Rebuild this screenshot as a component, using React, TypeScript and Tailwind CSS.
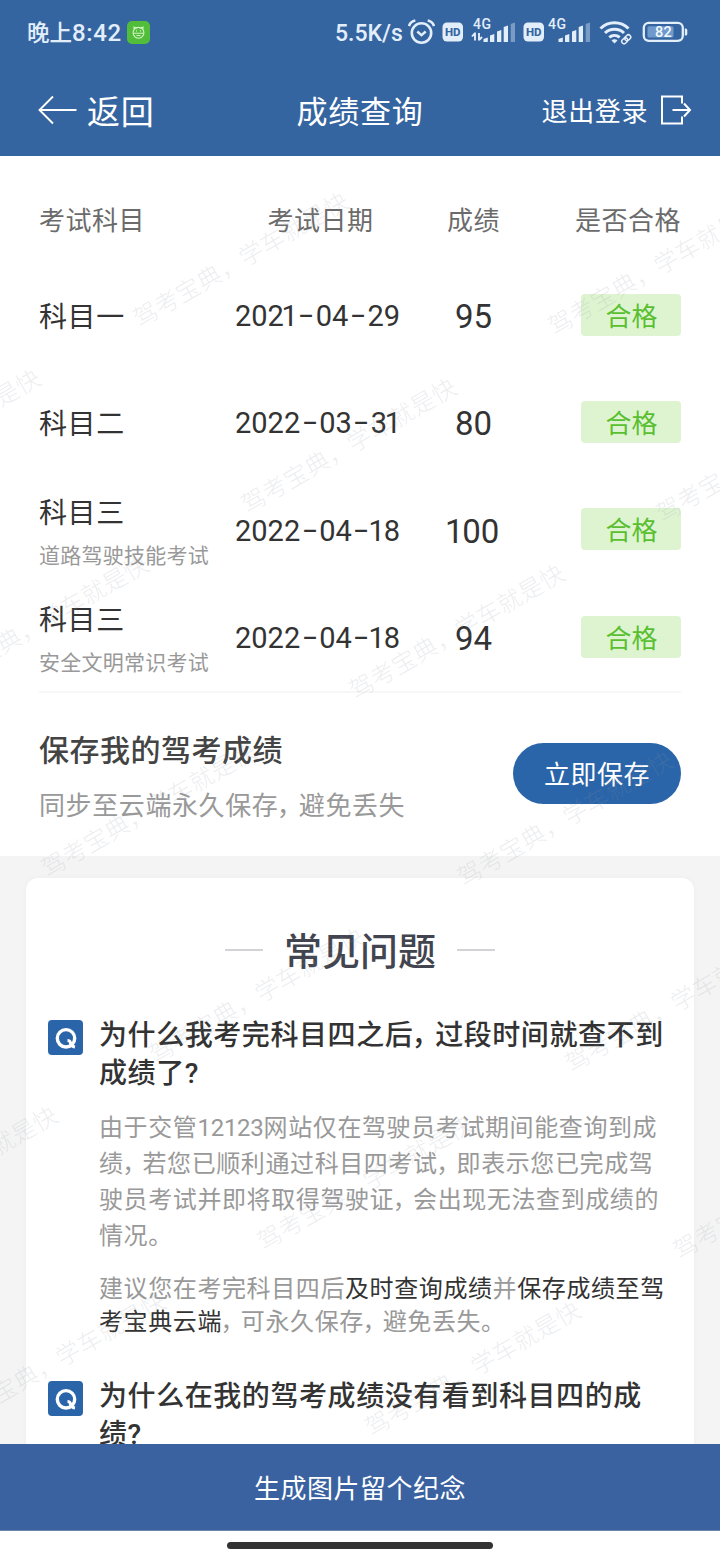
import { Fragment } from "react";

const CJK = "font-['Roboto','Noto_Sans_CJK_SC',sans-serif]";

const watermarks: { x: number; y: number }[] = [];
for (let i = -4; i <= 3; i++) {
  for (let j = -3; j <= 9; j++) {
    const x = 145.5 + 307.5 * i + 108 * j;
    const y = 158.5 - 177.5 * i + 186.4 * j;
    if (x > -260 && x < 740 && y > -40 && y < 1450) watermarks.push({ x, y });
  }
}

/** Text whose full-width commas are set a little narrower than one em. */
function T({ children }: { children: string }) {
  const parts = children.split("，");
  return (
    <>
      {parts.map((part, i) => (
        <Fragment key={i}>
          {i > 0 && <span className="-ml-[0.06em] -mr-[0.18em]">，</span>}
          {part}
        </Fragment>
      ))}
    </>
  );
}

/** Digits with a proportional, narrower "1". */
function Digits({ value }: { value: string }) {
  return (
    <span className="inline-flex">
      {value.split(/(1)/).map((part, i) =>
        part === "1" ? (
          <span key={i} className="-ml-[0.08em] -mr-[0.04em]">
            1
          </span>
        ) : (
          <Fragment key={i}>{part && <span>{part}</span>}</Fragment>
        ),
      )}
    </span>
  );
}

function HdIcon() {
  return (
    <svg width="22" height="20" viewBox="0 0 22 20" className="shrink-0">
      <rect x="0.5" y="0.5" width="20.5" height="19" rx="4.5" fill="#e3eefb" />
      <text x="10.8" y="14.2" textAnchor="middle" fontSize="11.5" fontWeight="800" fill="#3565a0" fontFamily="Roboto">
        HD
      </text>
    </svg>
  );
}

function Signal({ data }: { data?: boolean }) {
  const o = data ? 0 : -2;
  return (
    <svg width={data ? 45 : 43} height="28" viewBox={data ? "0 0 45 28" : "0 0 43 28"} className="shrink-0">
      <text x={data ? 2 : 0} y="14" fontSize="14" fontWeight="500" fill="#e3eefb" fontFamily="Roboto" letterSpacing="0.500">
        4G
      </text>
      {data && (
        <path d="M4 25.5v-8M4 18l-3 3.5M8 18v7.5M8 25.2l3-3.2" stroke="#e3eefb" strokeWidth="1.9" fill="none" />
      )}
      <g fill="#e3eefb" transform={`translate(${o} 0)`}>
        <path d="M12.500 27v-3l4.300-1.500v4.500z" />
        <path d="M19 27v-6.500l4.300-1.500v8z" />
        <path d="M26 27v-10.500l4.300-1.500v12z" />
        <path d="M32.700 27v-15l4.300-1.500v16.500z" />
        <path d="M39.700 27v-18l4.300-1.500v19.500z" opacity="0.4" />
      </g>
    </svg>
  );
}

function StatusBar() {
  return (
    <div className="flex h-[64px] items-center text-[#e3eefb]">
      <span className="ml-[27px] mt-[2px] flex w-[100px] shrink-0 items-center whitespace-nowrap font-medium leading-none">
        <span className="text-[22.500px]">晚上</span>
        <span className="text-[24px] tracking-[0.600px]">8:42</span>
      </span>
      <svg width="23" height="23" viewBox="0 0 23 23" className="shrink-0">
        <rect width="23" height="23" rx="5" fill="#52bd3b" />
        <g fill="none" stroke="#d3f5c4" strokeWidth="1.1">
          <path d="M7 8.500V6l2.200 1a6 6 0 0 1 4.600 0L16 6v2.500" />
          <circle cx="11.500" cy="11.800" r="5.400" />
          <path d="M6.300 12.300h10.400M9.500 9.300v1.200M13.500 9.300v1.200M9.500 14.500h4" />
        </g>
      </svg>
      <span className="ml-[185px] mt-[2px] w-[73px] shrink-0 whitespace-nowrap text-[23px] font-medium leading-none">
        5.5K/s
      </span>
      <svg width="27" height="26" viewBox="0 0 27 26" className="shrink-0" fill="none" stroke="#e3eefb" strokeWidth="2.600">
        <circle cx="13.500" cy="14" r="9.700" />
        <path d="M1 7C2 4 4.500 2 7.300 1.500M26 7C25 4 22.500 2 19.700 1.500" />
        <path d="M9.300 12.500l4.200 3.700 4.200-3.700" strokeWidth="2.400" />
      </svg>
      <div className="ml-[7px] flex items-center">
        <HdIcon />
        <div className="-mt-[7px] ml-[7px] flex">
          <Signal data />
        </div>
        <div className="ml-[7px] flex">
          <HdIcon />
        </div>
        <div className="-mt-[7px] ml-[3px] flex">
          <Signal />
        </div>
      </div>
      <svg width="34" height="26" viewBox="0 0 34 26" className="ml-[8px] shrink-0" fill="none" stroke="#e3eefb">
        <path d="M1.500 9.500a20 20 0 0 1 28 0" strokeWidth="3" />
        <path d="M6 14a14 14 0 0 1 19 0" strokeWidth="3" />
        <path d="M10.300 18.300a8 8 0 0 1 10.400 0" strokeWidth="3" />
        <path d="M12.500 21.500a4 4 0 0 1 6 0l-3 3z" fill="#e3eefb" stroke="none" />
        <rect x="22.500" y="19.500" width="6.500" height="4.600" rx="2.300" transform="rotate(-45 25.700 21.800)" strokeWidth="1.500" />
        <rect x="25.500" y="16.500" width="6.500" height="4.600" rx="2.300" transform="rotate(-45 28.700 18.800)" strokeWidth="1.500" />
      </svg>
      <svg width="46" height="22" viewBox="0 0 46 22" className="ml-[9px] shrink-0">
        <rect x="1.800" y="1.800" width="39" height="18" rx="5" fill="none" stroke="#e3eefb" strokeWidth="2.300" />
        <rect x="5.500" y="5.200" width="26" height="11.300" rx="1.500" fill="#6f9acb" />
        <path d="M42.800 7.500h1a1.500 1.500 0 0 1 1.500 1.500v4a1.500 1.500 0 0 1-1.500 1.500h-1z" fill="#e3eefb" />
        <text x="21.500" y="15.900" textAnchor="middle" fontSize="14.500" fontWeight="500" fill="#f3f9ff" fontFamily="Roboto" letterSpacing="0.300">
          82
        </text>
      </svg>
    </div>
  );
}

function NavBar() {
  return (
    <div className="relative flex h-[92px] items-center justify-between pl-[38px] pr-[28px] text-white">
      <button className="flex items-center">
        <svg width="39" height="30" viewBox="0 0 39 30" fill="none" stroke="#fff" strokeWidth="1.900" className="mb-[1px]">
          <path d="M38.500 15H1.500M15 1.500L1.500 15 15 28.500" />
        </svg>
        <span className="ml-[10px] mt-[4px] text-[33px] leading-none tracking-[0.700px]">返回</span>
      </button>
      <h1 className="absolute inset-x-0 mt-[4px] text-center text-[31px] font-normal leading-none tracking-[0.800px]">成绩查询</h1>
      <button className="flex items-center">
        <span className="mt-[4px] text-[26px] leading-none tracking-[0.6px]">退出登录</span>
        <svg width="32" height="30" viewBox="0 0 32 30" fill="none" stroke="#fff" strokeWidth="2" className="mb-[1px] ml-[12px]">
          <path d="M22 8.500V1.500H2v27h20v-7" />
          <path d="M12.500 15H30M24 8.500l6 6.500-6 6.500" />
        </svg>
      </button>
    </div>
  );
}

const results = [
  { subject: "科目一", date: "2021-04-29", score: "95" },
  { subject: "科目二", date: "2022-03-31", score: "80" },
  { subject: "科目三", note: "道路驾驶技能考试", date: "2022-04-18", score: "100" },
  { subject: "科目三", note: "安全文明常识考试", date: "2022-04-18", score: "94" },
];

function ExamDate({ value }: { value: string }) {
  return (
    <span className="flex w-[165px] justify-between pt-[2px] text-[29px] leading-none">
      {value.split("-").map((part, i) => (
        <Fragment key={i}>
          {i > 0 && <span className="-mt-px scale-x-[1.700]">-</span>}
          <Digits value={part} />
        </Fragment>
      ))}
    </span>
  );
}

function Results() {
  const cols = "grid grid-cols-[196px_170px_136px_140px] items-center";
  return (
    <div className="mx-[39px] border-b-2 border-[#f7f7f7] pt-[22px]">
      <div className={`${cols} h-[84px] pt-[2px] text-[26px] leading-none tracking-[0.500px] text-[#6b6b6b]`}>
        <span>考试科目</span>
        <span className="pl-px text-center">考试日期</span>
        <span className="pl-px text-center">成绩</span>
        <span className="text-right">是否合格</span>
      </div>
      {results.map((r, i) => (
        <div key={i} className={`${cols} h-[107.300px] text-[#333]`}>
          <div className="flex flex-col whitespace-nowrap pt-[4px]">
            <span className={r.note ? "mt-[5px] text-[28px] leading-[40px] tracking-[0.600px]" : "text-[28px] leading-[40px] tracking-[0.600px]"}>
              {r.subject}
            </span>
            {r.note && <span className="mt-[2px] text-[21px] leading-[40px] tracking-[0.250px] text-[#999]">{r.note}</span>}
          </div>
          <ExamDate value={r.date} />
          <span className="flex justify-center pl-px pt-[2px] text-[33px] leading-none">
            <Digits value={r.score} />
          </span>
          <span className="-mt-[2px] flex h-[42px] w-[100px] items-center justify-center justify-self-end rounded-[4px] bg-[#def4d1] pl-px pt-[4px] text-[26px] leading-none text-[#5abf30]">
            合格
          </span>
        </div>
      ))}
    </div>
  );
}

function SaveBar() {
  return (
    <div className="flex h-[163px] items-center justify-between px-[39px]">
      <div className="flex flex-col pt-[4px]">
        <span className="text-[30px] font-medium leading-[44px] tracking-[0.500px] text-[#444]">保存我的驾考成绩</span>
        <span className="mt-[14px] text-[26px] leading-[38px] tracking-[0.600px] text-[#999]">
          <T>同步至云端永久保存，避免丢失</T>
        </span>
      </div>
      <button className="-mt-[2px] h-[61px] w-[168px] rounded-full bg-[#2b65a9] pt-[3px] text-[26px] leading-none tracking-[0.500px] text-white">
        立即保存
      </button>
    </div>
  );
}

function Question({ lines }: { lines: string[] }) {
  return (
    <div className="flex">
      <span className="mt-[4px] flex h-[35px] w-[35px] shrink-0 items-center justify-center rounded-[4px] bg-[#2b65a9]">
        <svg width="24" height="24" viewBox="0 0 24 24" fill="none" stroke="#fff" strokeWidth="3.400" className="mt-[2px]">
          <circle cx="12" cy="11.300" r="8.700" />
          <path d="M13.500 13.500c2.400 0 2.700 1 3.200 3 .4 1.900 1.300 3 4.300 3.500" strokeWidth="3.200" />
        </svg>
      </span>
      <h3 className="mt-[1px] ml-[16px] whitespace-nowrap text-[28px] font-medium leading-[38px] tracking-[0.570px] text-[#333]">
        {lines.map((l) => (
          <div key={l}>
            <T>{l}</T>
          </div>
        ))}
      </h3>
    </div>
  );
}

const answer = [
  "绩，若您已顺利通过科目四考试，即表示您已完成驾",
  "驶员考试并即将取得驾驶证，会出现无法查到成绩的",
  "情况。",
];

function Faq() {
  return (
    <section className="mx-[26px] mt-[22px] h-[700px] rounded-t-[12px] bg-white pl-[22px] pt-[48px] shadow-[0_0_6px_rgba(0,0,0,0.03)]">
      <div className="mr-[22px] flex h-[48px] items-center justify-center gap-[21px]">
        <i className="h-[2px] w-[38px] bg-[#d2d3d6]" />
        <h2 className="mt-[3px] text-[38px] font-medium leading-none text-[#42454f]">常见问题</h2>
        <i className="h-[2px] w-[38px] bg-[#d2d3d6]" />
      </div>
      <div className="mt-[42px]">
        <Question lines={["为什么我考完科目四之后，过段时间就查不到", "成绩了?"]} />
      </div>
      <div className="ml-[51px] mt-[17px] whitespace-nowrap text-[24px] leading-[36px] tracking-[0.600px] text-[#999]">
        <p>
          由于交管<span className="tracking-[-0.250px]">12123</span>网站仅在驾驶员考试期间能查询到成
        </p>
        {answer.map((l) => (
          <p key={l}>
            <T>{l}</T>
          </p>
        ))}
      </div>
      <div className="ml-[51px] mt-[19px] whitespace-nowrap text-[24px] leading-[33px] tracking-[0.600px] text-[#999]">
        <p>
          建议您在考完科目四后<span className="text-[#333]">及时查询成绩</span>并<span className="text-[#333]">保存成绩至驾</span>
        </p>
        <p>
          <span className="text-[#333]">考宝典云端</span>
          <T>，可永久保存，避免丢失。</T>
        </p>
      </div>
      <div className="mt-[38px]">
        <Question lines={["为什么在我的驾考成绩没有看到科目四的成", "绩?"]} />
      </div>
    </section>
  );
}

function Watermark() {
  return (
    <div aria-hidden className="pointer-events-none absolute inset-0 overflow-hidden">
      {watermarks.map((w, i) => (
        <span
          key={i}
          className="absolute -ml-[12px] -mt-[18px] origin-[12px_18px] -rotate-30 whitespace-nowrap text-[24px] font-light leading-[36px] tracking-[0.400px] text-[rgba(140,150,160,0.18)]"
          style={{ left: w.x, top: w.y }}
        >
          驾考宝典，学车就是快
        </span>
      ))}
    </div>
  );
}

export default function App() {
  return (
    <div className={`flex h-[1560px] w-[720px] flex-col overflow-hidden bg-white ${CJK}`}>
      <header className="h-[156px] shrink-0 bg-[#3565a0]">
        <StatusBar />
        <NavBar />
      </header>
      <main className="relative h-[1288px] shrink-0 overflow-hidden bg-[#f4f4f4]">
        <div className="h-[700px] bg-white">
          <Results />
          <SaveBar />
        </div>
        <Faq />
        <Watermark />
      </main>
      <button className="h-[87px] shrink-0 border-b border-[#6d86a8] bg-[#3a62a0] pt-[4px] text-[26px] leading-none tracking-[0.500px] text-white">
        生成图片留个纪念
      </button>
      <div className="flex h-[29px] items-center justify-center">
        <div className="h-[7px] w-[266px] rounded-full bg-[#333]" />
      </div>
    </div>
  );
}
